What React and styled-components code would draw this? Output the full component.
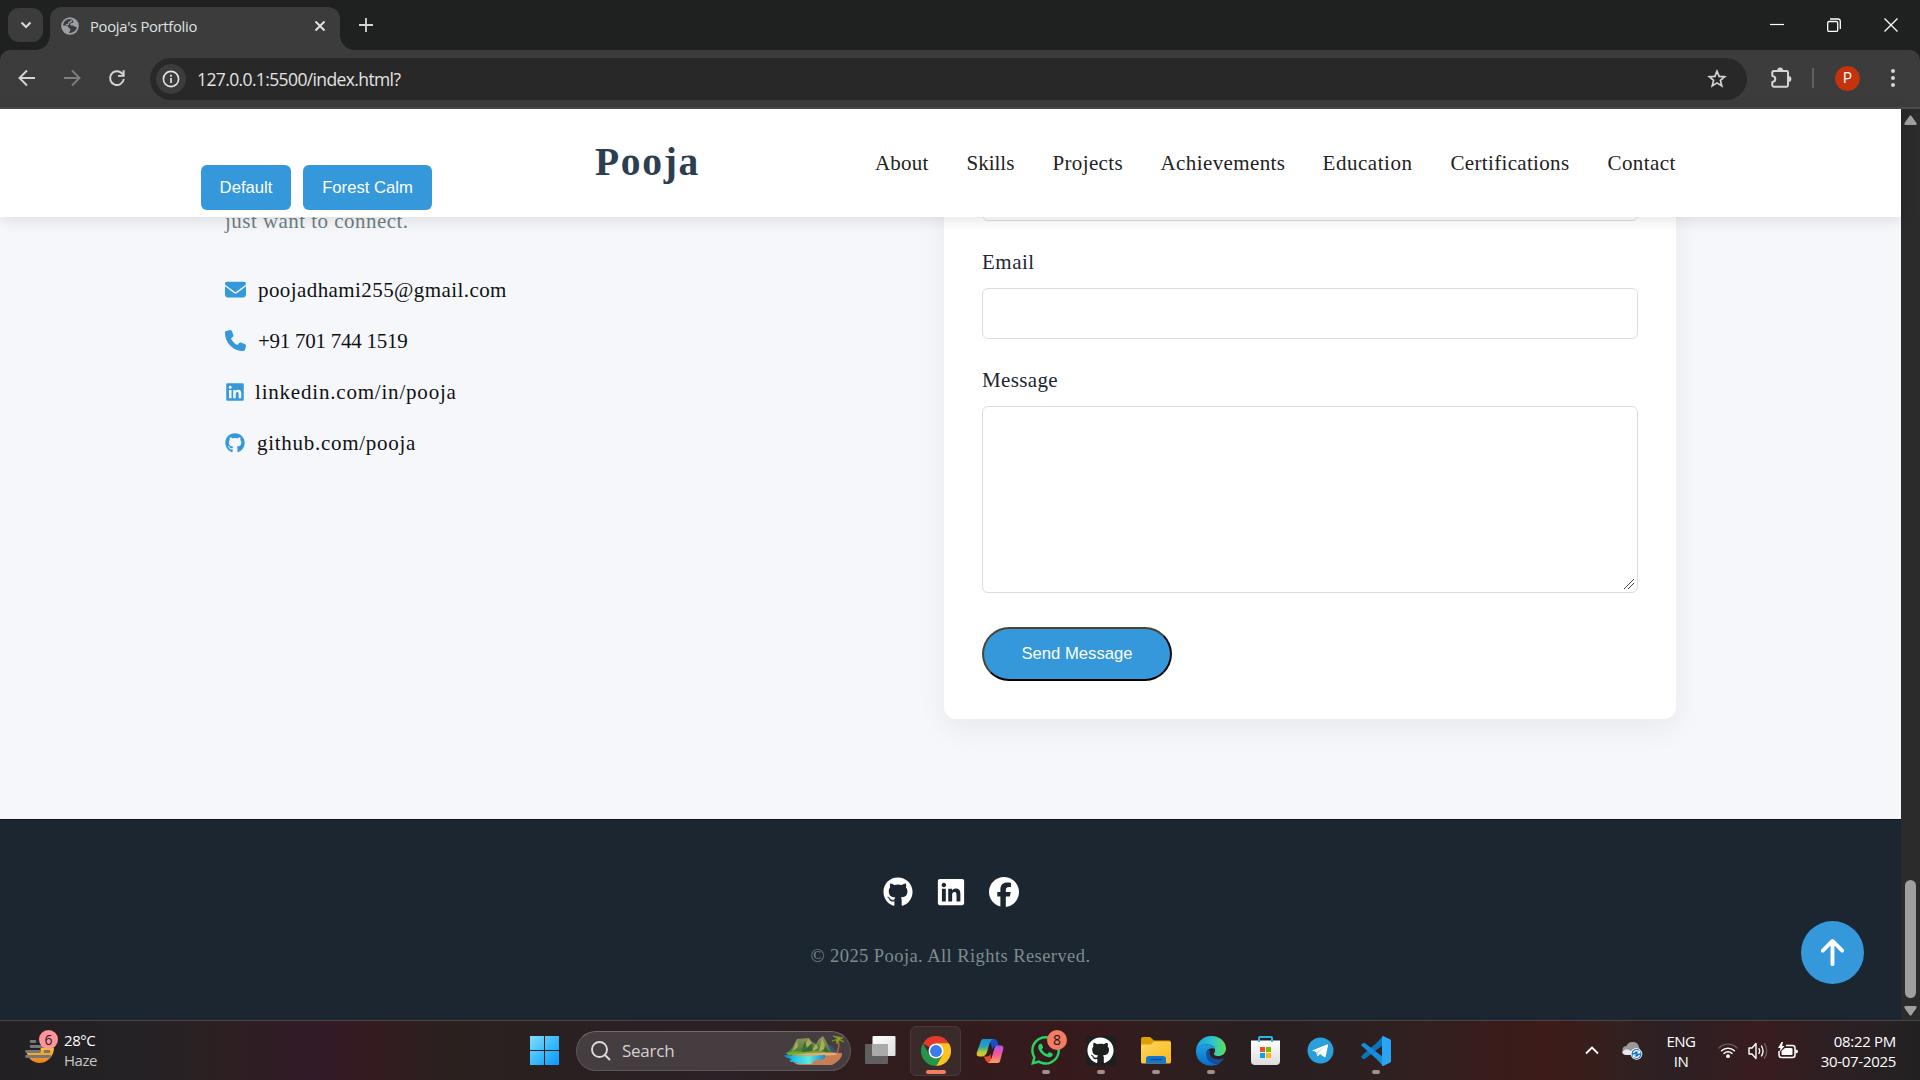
import React from "react";
import styled, { createGlobalStyle, css } from "styled-components";
import { FaEnvelope, FaPhone, FaLinkedin, FaGithub, FaFacebook, FaArrowUp } from "react-icons/fa6";
import { FaWhatsapp } from "react-icons/fa";

const Global = createGlobalStyle`
  * { box-sizing: border-box; }
  html, body { margin: 0; padding: 0; overflow: hidden; background: #1f2120; }
  button { font: inherit; border: 0; padding: 0; background: none; color: inherit; }
  svg { display: block; flex: none; }
`;

const serif = css`font-family: "Liberation Serif", serif;`;
const ui = css`font-family: "Open Sans", "Noto Sans", sans-serif;`;

const Screen = styled.div`
  width: 1920px; height: 1080px; display: flex; flex-direction: column; overflow: hidden;
`;

/* ---------- browser chrome ---------- */
const TabStrip = styled.div`
  height: 50px; flex: none; display: flex; align-items: flex-start; background: #1f2120; padding-left: 8px; ${ui}
`;
const TabSearch = styled.button`
  width: 35px; height: 34px; margin-top: 8px; border-radius: 11px; background: #3c3c3c;
  display: grid; place-items: center;
`;
const Tab = styled.div`
  position: relative; width: 290px; height: 43px; margin: 7px 0 0 7px; padding: 0 14px 6px 11px;
  display: flex; align-items: center; background: #3c3c3c; border-radius: 12px 12px 0 0; color: #dfe1e0;
  &::before, &::after {
    content: ""; position: absolute; bottom: 0; width: 14px; height: 14px;
  }
  &::before { left: -14px; background: radial-gradient(circle at 0 0, transparent 13.5px, #3c3c3c 14px); }
  &::after { right: -14px; background: radial-gradient(circle at 100% 0, transparent 13.5px, #3c3c3c 14px); }
`;
const TabTitle = styled.span`
  flex: 1; margin-left: 11px; font-size: 14.8px; letter-spacing: -0.3px; line-height: 20px; white-space: nowrap;
`;
const NewTab = styled.button`
  width: 36px; height: 34px; margin: 8px 0 0 8px; display: grid; place-items: center;
`;
const WindowControls = styled.div`
  margin-left: auto; display: flex; height: 49px; align-items: center; padding-right: 22px; gap: 43px;
`;
const Toolbar = styled.div`
  height: 59px; flex: none; display: flex; align-items: center; padding: 0 0 1px;
  background: #3c3c3c; border-bottom: 2px solid #4b4b4b; border-radius: 10px 10px 0 0; ${ui}
`;
const NavIcons = styled.div`
  display: flex; align-items: center; gap: 27px; padding-left: 18px; width: 150px;
`;
const Omnibox = styled.div`
  width: 1597px; height: 42px; border-radius: 21px; background: #282828; margin-top: 2px;
  display: flex; align-items: center; padding: 0 20px 0 6px;
`;
const InfoBadge = styled.span`
  width: 30px; height: 30px; border-radius: 50%; background: #3c3c3c; display: grid; place-items: center;
`;
const Url = styled.span`
  flex: 1; margin-left: 11px; font-size: 17.5px; letter-spacing: -0.62px; color: #e3e3e3; line-height: 24px;
`;
const Actions = styled.div`
  display: flex; align-items: center; padding-left: 23px;
`;
const Divider = styled.span` width: 2px; height: 20px; margin: 0 20px 0 20px; background: #606060; `;
const Avatar = styled.span`
  width: 27px; height: 27px; border-radius: 50%; background: #c5320b; border: 1px solid #23434a;
  color: #fff; font: 14px/25px Roboto, sans-serif; text-align: center; margin-right: 29.5px;
`;

/* ---------- page ---------- */
const Viewport = styled.div` height: 911px; flex: none; display: flex; `;
const Page = styled.div`
  width: 1901px; height: 911px; display: flex; flex-direction: column; background: #f5f7fb; ${serif}
`;
const Header = styled.header`
  height: 108px; flex: none; background: #fff; box-shadow: 0 2px 15px rgba(0,0,0,.12); z-index: 2;
  position: relative; display: flex; padding-left: 201px;
`;
const Themes = styled.div` display: flex; gap: 12px; padding-top: 56px; width: 394px; `;
const ThemeButton = styled.button`
  width: ${(p) => p.$w}px; height: 45px; border-radius: 6px; background: #3498db; color: #fff;
  font-family: "Liberation Sans", sans-serif; font-size: 16.67px;
`;
const Logo = styled.div`
  width: 280px; padding-top: 30px; font-size: 39.5px; line-height: 46px; font-weight: 700; letter-spacing: 1.7px; color: #2c3e50;
`;
const Nav = styled.nav` display: flex; gap: 38px; padding-top: 41px; `;
const NavLink = styled.a`
  width: ${(p) => p.$w}px; font-size: 21px; line-height: 26px; letter-spacing: ${(p) => p.$ls || 0}px;
  color: #222; white-space: nowrap;
`;
const Contact = styled.main`
  height: 602px; flex: none; display: flex; padding-left: 225px; overflow: hidden;
`;
const Info = styled.section` width: 719px; margin-top: -9px; `;
const Blurb = styled.p` margin: 0; font-size: 21px; line-height: 26px; letter-spacing: .46px; color: #6f7f82; `;
const InfoList = styled.ul` list-style: none; margin: 30px 0 0; padding: 0; `;
const InfoItem = styled.li`
  display: flex; align-items: center; height: 51px; color: #3498db;
`;
const InfoText = styled.span`
  margin-left: ${(p) => p.$gap}px; font-size: 21px; line-height: 26px; letter-spacing: ${(p) => p.$ls}px; color: #111;
`;
const Card = styled.form`
  width: 732px; height: 532px; margin-top: -30px; padding: 0 38px; background: #fff; border-radius: 12px;
  box-shadow: 0 10px 30px rgba(0,0,0,.06); display: flex; flex-direction: column; align-items: flex-start;
`;
const Label = styled.label`
  font-size: 21px; line-height: 26px; letter-spacing: ${(p) => p.$ls}px; color: #1c2733; margin: ${(p) => p.$m};
`;
const field = css`
  width: 656px; flex: none; border: 1px solid #ddd; border-radius: 6px; background: #fff; outline: 0; display: block; margin: 0;
`;
const Input = styled.input` ${field} height: ${(p) => p.$h || 51}px; `;
const Message = styled.textarea`
  ${field} height: 187px; resize: vertical;
  &::-webkit-resizer {
    background: linear-gradient(135deg, transparent 0 47%, #444 47% 53%, transparent 53% 67%, #444 67% 73%, transparent 73%) 2px 2px / 10px 10px no-repeat;
  }
`;
const Send = styled.button`
  width: 190px; height: 54px; margin-top: 34px; border-radius: 27px; background: #3498db; color: #fff;
  border: 2px solid; border-color: #4a4432 #0a0a0a #000 #4a4432;
  font-family: "Liberation Sans", sans-serif; font-size: 16.67px;
`;
const Footer = styled.footer`
  height: 201px; flex: none; background: #1b2631; border-top: 1px solid #0c1420; display: flex; flex-direction: column; align-items: center;
`;
const Social = styled.div` display: flex; gap: 23px; padding-top: 57px; color: #fff; height: 90px; align-items: flex-start; `;
const Copyright = styled.p`
  margin: 32px 0 0; font-size: 18.5px; line-height: 28px; letter-spacing: .43px; color: #7f8c8d; white-space: nowrap;
`;
const ToTop = styled.button`
  position: absolute; left: 1801px; top: 921px; width: 63px; height: 63px; border-radius: 50%;
  background: #3498db; color: #fff; display: grid; place-items: center; z-index: 3; padding-bottom: 1px;
`;
const Scrollbar = styled.div`
  width: 19px; background: #2b2b2b; display: flex; flex-direction: column; align-items: center; padding: 6px 0 4px;
`;
const Thumb = styled.div` width: 11px; height: 118px; margin: auto 0 8px; border-radius: 6px; background: #9f9f9f; `;

/* ---------- taskbar ---------- */
const Taskbar = styled.div`
  height: 60px; flex: none; display: flex; align-items: center; border-top: 1px solid #4b4342; color: #fff; ${ui}
  background: linear-gradient(90deg, #222023 0, #252225 140px, #2c2021 220px, #321a28 320px, #351b20 370px, #2a211f 450px,
    #292021 560px, #2a2226 730px, #301d1e 850px, #361a1c 1090px, #2c1f20 1200px, #271f21 1260px, #2b1f21 1340px,
    #302020 1400px, #3d1b18 1550px, #33201f 1620px, #2c2024 1670px, #391c1e 1760px, #2c2023 1840px, #222122 1920px);
`;
const Weather = styled.div` display: flex; width: 530px; padding: 9px 0 0 24px; height: 59px; `;
const WeatherText = styled.div`
  display: flex; flex-direction: column; padding-left: 4px; font-size: 15px; line-height: 20px; letter-spacing: -.45px;
  span:last-child { color: #c9c6c6; }
`;
const SearchBox = styled.div`
  width: 275px; height: 40px; margin: 0 2px 0 17px; border-radius: 20px; background: #453d40; border: 1px solid #5c5557;
  border-top-color: #736c6e; display: flex; align-items: center; padding: 0 6px 0 14px;
  span { flex: 1; margin-left: 11px; font-size: 17px; letter-spacing: -.25px; color: #d5d1d2; padding-bottom: 1px; }
`;
const TaskApp = styled.div`
  position: relative; width: 51px; height: 50px; margin: 0 2px; display: flex; flex-direction: column; align-items: center;
  padding-top: 7px; border-radius: 6px; border: 1px solid ${(p) => (p.$active ? "#493938" : "transparent")};
  background: ${(p) => (p.$active ? "#3b2a2a" : "transparent")};
`;
const IconSlot = styled.div` width: 36px; height: 34px; display: grid; place-items: center; `;
const Running = styled.i`
  width: ${(p) => (p.$active ? 20 : 8)}px; height: 4px; border-radius: 2px; margin-top: 2px;
  background: ${(p) => (p.$active ? "#f47c62" : "#9c9090")};
`;
const Badge = styled.b`
  position: absolute; right: 3px; top: 3px; width: 20px; height: 20px; border-radius: 50%; background: #f47c62; color: #1b1210;
  font-weight: 400; font-size: 14px; line-height: 19px; text-align: center;
`;
const Tray = styled.div` margin-left: auto; display: flex; align-items: center; padding-right: 24px; height: 59px; `;
const TrayItem = styled.div` margin-right: ${(p) => p.$mr}px; `;
const TrayText = styled.div`
  display: flex; flex-direction: column; width: ${(p) => p.$w}px; align-items: ${(p) => p.$align};
  font-size: 15px; line-height: 20px; letter-spacing: ${(p) => p.$ls}px; white-space: nowrap;
  margin-right: ${(p) => p.$mr || 0}px;
`;

/* ---------- icons ---------- */
const Line = ({ w = 20, h = w, vb = `0 0 ${w} ${h}`, d, c = "#d5d5d5", s = 2, fill = "none", ...r }) => (
  <svg width={w} height={h} viewBox={vb} fill={fill} stroke={c} strokeWidth={s} {...r}><path d={d} /></svg>
);

const GlobeIcon = () => (
  <svg width="18" height="18" viewBox="0 0 18 18">
    <circle cx="9" cy="9" r="8.8" fill="#9aa0a6" />
    <path d="M7.3 2.2c-3 .6-5.200 3.300-5.200 6.300 1.700.2 3.200 0 4.300.5 1.300.6.7 2 2 2.300 1 .3 1 1.200.8 2.200-.2 1-1.400 1.300-1.300 2.300 3.700.7 7.300-2 8-5.600-1.200-.2-2.300-.3-3-1.200-.6-.8-2.200-.2-3-.6-.8-.5-.8-1.700 0-2.200.9-.5 2.500-.2 2.600-1.300.1-.9-1.200-1-1.300-2.200-1.200-.6-2.500-.8-3.900-.5z" fill="#3c3c3c" />
    <path d="M9.500 3.200c1 .4.9 1.500-.2 1.700-1.100.2-1.900.8-1.700 1.800.2.9-1 1.300-2.500.8" stroke="#9aa0a6" strokeWidth="1.300" fill="none" />
  </svg>
);
const ReloadIcon = () => (
  <svg width="18" height="18" viewBox="0 0 18 18">
    <path d="M15.800 10A6.900 6.900 0 1 1 13.800 4.200L15.500 6" fill="none" stroke="#d5d5d5" strokeWidth="1.900" />
    <path d="M14.600 1.200h2v6.600H10V5.900h4.600z" fill="#d5d5d5" />
  </svg>
);
const PuzzleIcon = () => (
  <svg width="22" height="22" viewBox="0 0 22 22">
    <path d="M2.300 5.500q0-1.500 1.500-1.500h12.900q1.300 0 1.300 1.300v13q0 1.400-1.300 1.400H3.800q-1.500 0-1.500-1.400V15.200q3-.8 3-3.200t-3-3.200z" fill="none" stroke="#d5d5d5" strokeWidth="2" />
    <path d="M7.300 3.500a2.900 2.900 0 0 1 5.800 0zM18.500 9.100a2.900 2.900 0 0 1 0 5.800z" fill="#d5d5d5" />
  </svg>
);
const HazeIcon = () => (
  <svg width="36" height="42" viewBox="0 0 36 42">
    <defs><linearGradient id="sun" x1="0" y1="0" x2="0" y2="1"><stop offset="0" stopColor="#f9c532" /><stop offset="1" stopColor="#ef7d1a" /></linearGradient></defs>
    <path d="M2.500 21C3 28 9 33 15.500 33 23 33 30 27 30 17.500H18q-1.500 0-1.500 1.500v2z" fill="url(#sun)" />
    <g stroke="#777678" strokeWidth="2.800" strokeLinecap="round"><path d="M7 11.500h4M7 16.500h12M2.500 21.500h13M21 21.500h4M2.500 26.500h23" /></g>
    <circle cx="24.500" cy="9.500" r="9.500" fill="#ff949b" />
    <text x="24.500" y="14.500" textAnchor="middle" fontSize="14" fontFamily="Open Sans" fill="#241a1c">6</text>
  </svg>
);
const WindowsIcon = () => (
  <svg width="29" height="29" viewBox="0 0 29 29">
    <defs><linearGradient id="win" x1="0" y1="0" x2="1" y2="1"><stop offset="0" stopColor="#86dcff" /><stop offset=".5" stopColor="#3cbcfb" /><stop offset="1" stopColor="#0a96ff" /></linearGradient></defs>
    <path d="M0 0h14v14H0zM15 0h14v14H15zM0 15h14v14H0zM15 15h14v14H15z" fill="url(#win)" />
  </svg>
);
const IslandIcon = () => (
  <svg width="60" height="32" viewBox="0 0 60 32">
    <defs>
      <linearGradient id="sea"><stop offset="0" stopColor="#1475c4" /><stop offset=".25" stopColor="#25c3e6" /><stop offset=".6" stopColor="#66e6d8" /><stop offset="1" stopColor="#1687cc" /></linearGradient>
      <linearGradient id="hill" x1="0" y1="0" x2="0" y2="1"><stop offset="0" stopColor="#97945a" /><stop offset="1" stopColor="#3e7a33" /></linearGradient>
    </defs>
    <path d="M38 18l6-8 4 1 6 8z" fill="#35547c" />
    <path d="M2 19l6-6 5-9 12-1 3 4 4 2 3-5 4-3 4 7 5 10z" fill="url(#hill)" />
    <path d="M13 5l-5 12 6-5zM24 4l-5 12 9-8zM32 9l-6 9 8-5zM38 3l-3 14 7-4z" fill="#aeaa5c" />
    <path d="M17 18l4-12 2 7 5-5 1 10zM39 18l2-8 4 8z" fill="#2b5e33" opacity=".75" />
    <path d="M2 18q9-3 18-1 12-2 22 0l-4 3H4z" fill="#6cae2c" />
    <path d="M8 20q24-4 50-2 1 6-10 12H16q-6-1-7-4z" fill="#c77e54" />
    <path d="M8 20q20-3 43-2l2 2-20 1z" fill="#e5ac72" />
    <path d="M0 20q22 1 41 0 2 4-6 5-8 1-7 4H12l2-2H6q-1-2 2-3-7-1-8-4z" fill="url(#sea)" />
    <path d="M53 18q3-7 1-14" stroke="#a8663b" strokeWidth="1.600" fill="none" />
    <path d="M54 4l-5-3 6 1 4 1-3 1 4 3-5-2-2 4-1-4-4 1z" fill="#98a62e" stroke="#768b28" />
  </svg>
);
const TaskViewIcon = () => (
  <svg width="31" height="29" viewBox="0 0 31 29">
    <defs><linearGradient id="tv" x1="0" y1="0" x2="1" y2="1"><stop offset="0" stopColor="#fff" /><stop offset="1" stopColor="#dedede" /></linearGradient></defs>
    <rect y="8" width="23" height="20" rx="1" fill="#606060" /><rect x="7.500" width="23" height="20" rx="1" fill="url(#tv)" /><path d="M7.500 8H23v12H7.500z" fill="#aaa" />
  </svg>
);
const ChromeIcon = () => (
  <svg width="30" height="30" viewBox="0 0 48 48">
    <path d="M24 24L3.200 12A24 24 0 0 1 44.800 12z" fill="#e33b2e" />
    <path d="M44.800 12A24 24 0 0 1 24 48L34.400 30 24 12z" fill="#fcc31e" />
    <path d="M3.200 12A24 24 0 0 0 24 48l10.400-18H13.600z" fill="#269547" />
    <path d="M24 12h20.800L34 14z" fill="#fcc31e" />
    <circle cx="24" cy="24" r="12" fill="#fff" /><circle cx="24" cy="24" r="9.500" fill="#3b7cec" />
  </svg>
);
const CopilotIcon = () => (
  <svg width="29" height="26" viewBox="0 0 30 28">
    <defs>
      <linearGradient id="cpA" x1="0" y1="0" x2="0" y2="1"><stop offset="0" stopColor="#168fe6" /><stop offset=".45" stopColor="#2ba5b0" /><stop offset=".75" stopColor="#b5cc35" /><stop offset="1" stopColor="#f6bb25" /></linearGradient>
      <linearGradient id="cpB" x1="0" y1="0" x2="0" y2="1"><stop offset="0" stopColor="#b454f0" /><stop offset=".5" stopColor="#ee5b96" /><stop offset="1" stopColor="#fda05c" /></linearGradient>
    </defs>
    <path d="M14 1h5q3 0 4 5l1 3h-3q-3 0-4 3z" fill="#1650c4" />
    <path d="M7 1h11q-3 1-4 5l-3 10q-1 3-4 4H3q-4 0-2.500-5L4 5q1-4 3-4z" fill="url(#cpA)" />
    <path d="M16 27q-6 1-8-7h3q3 0 4-3z" fill="#e5492f" />
    <path d="M23 27H12q3-1 4-5l3-10q1-4 4-4h3q4 0 2.500 5L26 22q-1 5-3 5z" fill="url(#cpB)" />
  </svg>
);
const GithubTile = styled.div` width: 30px; height: 30px; background: #1e1f20; display: grid; place-items: center; color: #fff; `;
const FolderIcon = () => (
  <svg width="30" height="27" viewBox="0 0 30 27">
    <defs><linearGradient id="fold" x1="0" y1="0" x2="1" y2="1"><stop offset="0" stopColor="#ffd75e" /><stop offset="1" stopColor="#f8b91c" /></linearGradient></defs>
    <path d="M0 2q0-2 2-2h7l4 3.500h15q2 0 2 2V12H0z" fill="#dfa006" /><path d="M0 7.500h10l3-3h15q2 0 2 2V25q0 1.500-2 1.500H2Q0 26.500 0 25z" fill="url(#fold)" />
    <path d="M5 26.500V22q0-3 3-3h14q3 0 3 3v4.500z" fill="#1377cf" /><path d="M9 22.500h12" stroke="#0d4e91" strokeWidth="1.300" />
  </svg>
);
const EdgeIcon = () => (
  <svg width="30" height="30" viewBox="0 0 30 30">
    <defs>
      <linearGradient id="edA"><stop offset="0" stopColor="#1d9ee2" /><stop offset=".55" stopColor="#2fc4cc" /><stop offset="1" stopColor="#60df55" /></linearGradient>
      <linearGradient id="edB" x1="0" y1="0" x2="0" y2="1"><stop offset="0" stopColor="#1da0e0" /><stop offset="1" stopColor="#0a6dc9" /></linearGradient>
    </defs>
    <path d="M0 14C1 6 7 0 15.500 0 24 0 30 6 30 12.500c0 5-4 7.500-7.500 7.500-4 0-5.500-1.500-4-3.500 2-4-1-8-7-8-5.500 0-9.500 2-11.500 5.500z" fill="url(#edA)" />
    <path d="M0 14c2-4 6.500-5.500 11-5.500 4 0 7 1.500 8 4.500-7-3-10 4-7.500 9 2.500 5 8 7 13 5C13 34-1 27 0 14z" fill="url(#edB)" />
    <path d="M12 13c-3 3-3 10 3 13.500 5 2.500 11 .5 13-4.500-5 3-16 1-14-7z" fill="#12519f" />
  </svg>
);
const StoreIcon = () => (
  <svg width="29" height="29" viewBox="0 0 29 29">
    <defs><linearGradient id="st" x1="0" y1="0" x2="0" y2="1"><stop offset="0" stopColor="#fff" /><stop offset="1" stopColor="#dcdcdc" /></linearGradient></defs>
    <path d="M0 4.500h29V25q0 4-4 4H4q-4 0-4-4z" fill="url(#st)" /><path d="M8 6V2q0-1 1-1h11q1 0 1 1v4" stroke="#2fb3ee" strokeWidth="2" fill="none" />
    <path d="M9 11h5v5H9z" fill="#f25022" /><path d="M15 11h5v5h-5z" fill="#7fba00" /><path d="M9 17h5v5H9z" fill="#00a4ef" /><path d="M15 17h5v5h-5z" fill="#ffb900" />
  </svg>
);
const TelegramIcon = () => (
  <svg width="27" height="27" viewBox="0 0 27 27">
    <circle cx="13.500" cy="13.500" r="13" fill="#2a9fdb" /><path d="M5 13.500L20 7.500q1.200-.4 1 1l-2.300 11q-.4 1.300-1.600.5l-4-3-2 2q-.6.4-.8-.3L9 15z" fill="#fff" /><path d="M9.500 15l8-5.300-6.200 6-.5 3z" fill="#b8d8ec" />
  </svg>
);
const CodeIcon = () => (
  <svg width="30" height="30" viewBox="0 0 30 30">
    <path d="M22 0l-6.500 7L2.500 18 .6 20.200q-.8.800 0 1.500l1.700 1.200q.7.400 1.400 0L22 9z" fill="#0b74bd" />
    <path d="M22 30l-6.500-7L.6 9.800q-.8-.8 0-1.500L2.300 7q.7-.4 1.400 0L22 21z" fill="#1a8bd8" />
    <path d="M22 0l7 3.200q1 .5 1 1.700v20.200q0 1.200-1 1.700L22 30q-1 0-1-1.500v-27Q21 0 22 0z" fill="#2aa4f4" />
  </svg>
);
const CloudIcon = () => (
  <svg width="21" height="18" viewBox="0 0 21 18">
    <path d="M5 12q-5-1-4.500-5Q1 4 4.500 4 6 0 10.500 0 16 0 17 5l1 3-7 4z" fill="#9b9899" /><path d="M4 13q-3 0-4-3 4-5 9-1 4-5 9-1v5z" fill="#e9e6e7" />
    <circle cx="14.500" cy="12" r="5.800" fill="#fff" /><circle cx="14.500" cy="12" r="5" fill="#1c74c4" /><path d="M11.500 11a3.200 3.200 0 0 1 6-.5M17.500 13a3.200 3.200 0 0 1-6 .5M17.700 8.500v2.500h-2.500M11.300 15.500V13h2.500" stroke="#fff" strokeWidth="1.200" fill="none" />
  </svg>
);
const WifiIcon = () => (
  <svg width="20" height="17" viewBox="0 0 20 17" fill="none" strokeLinecap="round">
    <path d="M1 6a12.500 12.500 0 0 1 18 0" stroke="#6b5b5c" strokeWidth="1.300" /><path d="M3.600 8.800a9 9 0 0 1 12.800 0M6 11.500a5.600 5.600 0 0 1 8 0" stroke="#fff" strokeWidth="1.500" /><circle cx="10" cy="14.200" r="1.900" fill="#fff" />
  </svg>
);
const SpeakerIcon = () => (
  <svg width="21" height="18" viewBox="0 0 21 18" fill="none" stroke="#fff" strokeWidth="1.400" strokeLinecap="round" strokeLinejoin="round">
    <path d="M1 6h3l4-4.500v15L4 12H1zM11 6.500q1.500 2.500 0 5M13.500 4q3 5 0 10" /><path d="M16.500 1.800q4.500 7.200 0 14.400" stroke="#6b5b5c" />
  </svg>
);
const BatteryIcon = () => (
  <svg width="20" height="17" viewBox="0 0 20 17">
    <path d="M8 3.500h6.500q2.500 0 2.500 2.500v7q0 2.500-2.500 2.500H3.500Q1 15.500 1 13V9" fill="none" stroke="#fff" strokeWidth="1.500" /><path d="M7 6h6.500q1 0 1 1v5q0 1-1 1h-9q-1 0-1-1V9z" fill="#fff" /><path d="M17.500 7.500q2.500 0 2.500 2t-2.500 2z" fill="#fff" /><path d="M3.500 0L0 6h2.500L1.500 10 6.500 4H4L5 0z" fill="#fff" />
  </svg>
);

const links = [["About", 53.5, 0.2], ["Skills", 48, 0], ["Projects", 70, 0.35], ["Achievements", 124, 0.4], ["Education", 90, 0.55], ["Certifications", 119, 0.33], ["Contact", 70, 0.4]];
const contacts = [
  [FaEnvelope, 21, "poojadhami255@gmail.com", 12, 0.42],
  [FaPhone, 21, "+91 701 744 1519", 12, -0.25],
  [FaLinkedin, 20, "linkedin.com/in/pooja", 10, 0.8],
  [FaGithub, 20, "github.com/pooja", 12, 0.72],
];
const apps = [
  { icon: <TaskViewIcon /> },
  { icon: <ChromeIcon />, run: true, active: true },
  { icon: <CopilotIcon /> },
  { icon: <FaWhatsapp size={33} color="#25d366" />, run: true, badge: "8" },
  { icon: <GithubTile><FaGithub size={27} /></GithubTile>, run: true },
  { icon: <FolderIcon />, run: true },
  { icon: <EdgeIcon />, run: true },
  { icon: <StoreIcon /> },
  { icon: <TelegramIcon /> },
  { icon: <CodeIcon />, run: true },
];

export default function App() {
  return (
    <Screen>
      <Global />
      <TabStrip>
        <TabSearch><Line w={12} h={8} d="M1.500 1.500L6 6l4.500-4.500" s={2.200} /></TabSearch>
        <Tab>
          <GlobeIcon />
          <TabTitle>Pooja's Portfolio</TabTitle>
          <Line w={12} d="M1.500 1.500l9 9M10.500 1.500l-9 9" s={1.800} c="#e6e6e6" />
        </Tab>
        <NewTab><Line w={14} d="M7 0v14M0 7h14" s={1.800} /></NewTab>
        <WindowControls>
          <Line w={14} d="M0 6.500h14" s={1.200} c="#fff" />
          <Line w={14} d="M.7 5q0-1.500 1.500-1.500h7q1.500 0 1.500 1.500v7q0 1.500-1.500 1.500h-7Q.7 13.500.7 12zM3 1h8q2.300 0 2.300 2.500V11" s={1.300} c="#fff" />
          <Line w={14} d="M.5.5l13 13M13.500.5l-13 13" s={1.300} c="#fff" />
        </WindowControls>
      </TabStrip>
      <Toolbar>
        <NavIcons>
          <Line w={18} d="M17 9H2M9 1.500L1.500 9 9 16.500" s={1.900} />
          <Line w={18} d="M1 9h15M9 1.500L16.500 9 9 16.500" s={1.900} c="#7e7e7e" />
          <ReloadIcon />
        </NavIcons>
        <Omnibox>
          <InfoBadge>
            <svg width="18" height="18" viewBox="0 0 18 18"><circle cx="9" cy="9" r="7.600" fill="none" stroke="#e3e3e3" strokeWidth="1.600" /><path d="M9 8v5M9 4.800v1.900" stroke="#e3e3e3" strokeWidth="1.700" /></svg>
          </InfoBadge>
          <Url>127.0.0.1:5500/index.html?</Url>
          <Line w={20} d="M10 2.200l2.100 5.200 5.600.4-4.300 3.600 1.400 5.500-4.800-3-4.800 3 1.400-5.500-4.300-3.600 5.600-.4z" s={1.700} />
        </Omnibox>
        <Actions>
          <PuzzleIcon />
          <Divider />
          <Avatar>P</Avatar>
          <svg width="4" height="20" viewBox="0 0 4 20" fill="#d5d5d5"><circle cx="2" cy="3" r="2" /><circle cx="2" cy="10" r="2" /><circle cx="2" cy="17" r="2" /></svg>
        </Actions>
      </Toolbar>
      <Viewport>
        <Page>
          <Header>
            <Themes><ThemeButton $w={90}>Default</ThemeButton><ThemeButton $w={129}>Forest Calm</ThemeButton></Themes>
            <Logo>Pooja</Logo>
            <Nav>{links.map(([t, w, ls]) => <NavLink key={t} $w={w} $ls={ls}>{t}</NavLink>)}</Nav>
          </Header>
          <Contact>
            <Info>
              <Blurb>just want to connect.</Blurb>
              <InfoList>
                {contacts.map(([Icon, size, text, gap, ls]) => (
                  <InfoItem key={text}><Icon size={size} /><InfoText $gap={gap} $ls={ls}>{text}</InfoText></InfoItem>
                ))}
              </InfoList>
            </Info>
            <Card>
              <Input aria-label="Name" $h={34} />
              <Label $ls={0.5} $m="28px 0 13px">Email</Label>
              <Input />
              <Label $ls={0.35} $m="28px 0 13px">Message</Label>
              <Message />
              <Send type="button">Send Message</Send>
            </Card>
          </Contact>
          <Footer>
            <Social><FaGithub size={30} /><FaLinkedin size={30} /><FaFacebook size={30} /></Social>
            <Copyright>© 2025 Pooja. All Rights Reserved.</Copyright>
          </Footer>
        </Page>
        <Scrollbar>
          <svg width="13" height="10" viewBox="0 0 13 10"><path d="M5.500 1q1-1.500 2 0l5 7q.5 2-1 2h-10q-1.500 0-1-2z" fill="#a0a0a0" /></svg>
          <Thumb />
          <svg width="13" height="10" viewBox="0 0 13 10"><path d="M5.500 9q1 1.500 2 0l5-7q.5-2-1-2h-10Q0 0 .5 2z" fill="#a0a0a0" /></svg>
        </Scrollbar>
      </Viewport>
      <ToTop><FaArrowUp size={31} /></ToTop>
      <Taskbar>
        <Weather>
          <HazeIcon />
          <WeatherText><span>28°C</span><span>Haze</span></WeatherText>
        </Weather>
        <div><WindowsIcon /></div>
        <SearchBox>
          <Line w={20} d="M13.500 13.500L19 19M8.500 1a7.500 7.500 0 1 0 0 15 7.500 7.500 0 0 0 0-15z" c="#dedada" s={1.900} />
          <span>Search</span>
          <IslandIcon />
        </SearchBox>
        {apps.map((a, i) => (
          <TaskApp key={i} $active={a.active}>
            <IconSlot>{a.icon}</IconSlot>
            {a.run && <Running $active={a.active} />}
            {a.badge && <Badge>{a.badge}</Badge>}
          </TaskApp>
        ))}
        <Tray>
          <TrayItem $mr={23}><Line w={14} h={9} d="M1 7.500l6-6 6 6" c="#fff" s={1.800} /></TrayItem>
          <TrayItem $mr={22}><CloudIcon /></TrayItem>
          <TrayText $align="center" $w={32} $mr={21} $ls={-0.5}><span>ENG</span><span>IN</span></TrayText>
          <TrayItem $mr={10}><WifiIcon /></TrayItem>
          <TrayItem $mr={9}><SpeakerIcon /></TrayItem>
          <TrayItem $mr={18}><BatteryIcon /></TrayItem>
          <TrayText $align="flex-end" $w={80} $ls={-0.3}><span>08:22 PM</span><span>30-07-2025</span></TrayText>
        </Tray>
      </Taskbar>
    </Screen>
  );
}
